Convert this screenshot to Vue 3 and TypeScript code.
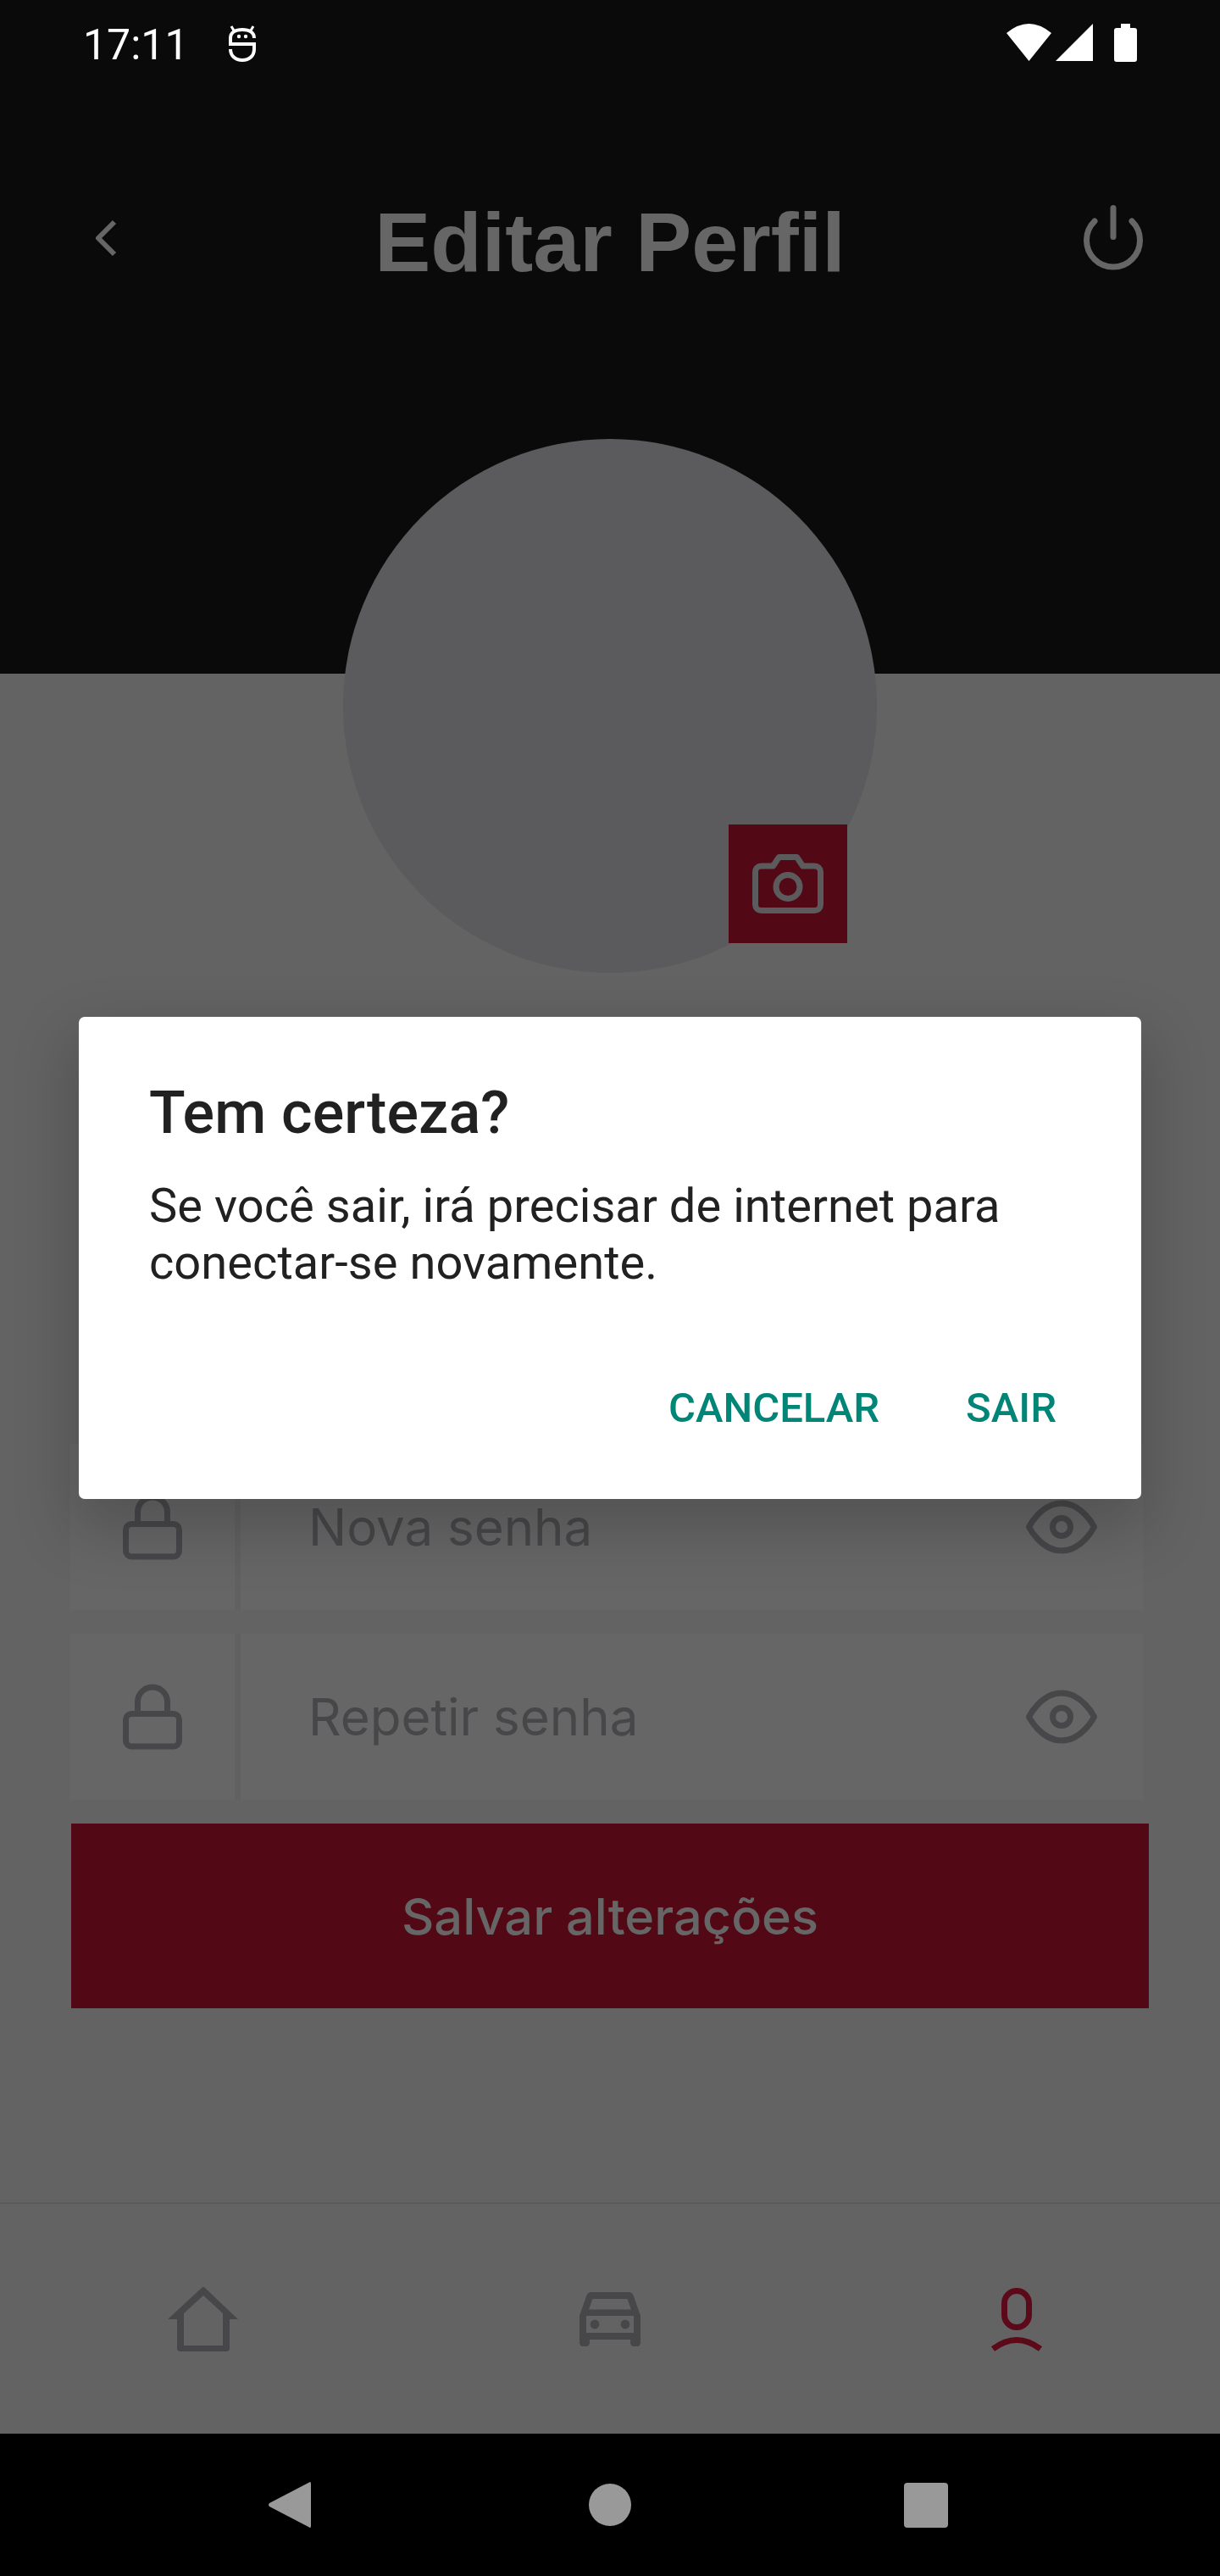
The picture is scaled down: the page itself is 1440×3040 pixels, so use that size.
<template>
  <div class="screen">
    <header class="top">
      <div class="status-bar">
        <span class="clock">17:11</span>
        <svg class="droid" width="32" height="44" viewBox="0 0 32 44" fill="none" stroke="#fff" stroke-width="4">
          <path d="M30 15C30 8 24 5 16 5S2 8 2 15v7h28v6c0 8-6 13-14 13S2 36 2 28" />
          <path d="M3 1l3 5M29 1l-3 5" stroke-width="3" />
          <circle cx="12" cy="13" r="2.2" fill="#fff" stroke="none" />
          <circle cx="20" cy="13" r="2.2" fill="#fff" stroke="none" />
        </svg>
        <div class="status-icons">
          <svg width="53" height="44" viewBox="0 0 53 44"><path d="M0 11Q26.5-11 53 11L26.5 44Z" fill="#fff" /></svg>
          <svg width="44" height="44" viewBox="0 0 44 44"><path d="M44 0V44H0Z" fill="#fff" /></svg>
          <svg class="battery" width="27" height="45" viewBox="0 0 27 45">
            <path d="M8 0h11v6H8z" fill="#fff" />
            <rect y="5" width="27" height="40" rx="3" fill="#fff" />
          </svg>
        </div>
      </div>
      <div class="app-bar">
        <svg width="84" height="112" viewBox="0 0 84 112" fill="none" stroke="#666" stroke-width="6" stroke-linejoin="round">
          <path d="M51 31L32 50l19 19" />
        </svg>
        <h1 class="title">Editar Perfil</h1>
        <svg width="84" height="112" viewBox="0 0 84 112" fill="none" stroke="#666" stroke-width="7" stroke-linecap="round">
          <path d="M42 14.5v34" />
          <path d="M20 30A31.5 31.5 0 1 0 64 30" />
        </svg>
      </div>
    </header>

    <main class="content">
      <div class="avatar">
        <div class="camera">
          <svg width="84" height="84" viewBox="0 0 24 24" fill="none" stroke="#5b5b5d" stroke-width="2" stroke-linecap="round" stroke-linejoin="round">
            <path d="M23 19a2 2 0 0 1-2 2H3a2 2 0 0 1-2-2V8a2 2 0 0 1 2-2h4l2-3h6l2 3h4a2 2 0 0 1 2 2z" />
            <circle cx="12" cy="13" r="4" />
          </svg>
        </div>
      </div>

      <form class="form" @submit.prevent>
        <div v-for="field in fields" :key="field" class="field">
          <div class="field-icon">
            <svg width="84" height="84" viewBox="0 0 24 24" fill="none" stroke="#47474a" stroke-width="2" stroke-linecap="round" stroke-linejoin="round">
              <rect x="3" y="11" width="18" height="11" rx="2" ry="2" />
              <path d="M7 11V7a5 5 0 0 1 10 0v4" />
            </svg>
          </div>
          <div class="field-input">
            <span class="placeholder">{{ field }}</span>
            <svg width="84" height="84" viewBox="0 0 24 24" fill="none" stroke="#47474a" stroke-width="2" stroke-linecap="round" stroke-linejoin="round">
              <path d="M1 12s4-8 11-8 11 8 11 8-4 8-11 8-11-8-11-8z" />
              <circle cx="12" cy="12" r="3" />
            </svg>
          </div>
        </div>
      </form>

      <button class="save" type="button">Salvar alterações</button>
    </main>

    <nav class="tabs">
      <div class="tab">
        <svg width="84" height="84" viewBox="0 0 84 84" fill="#47474a">
          <path fill-rule="evenodd" d="M40 5q2-2 4 0L83 42H73V76q0 4-4 4H15q-4 0-4-4V42H0ZM42 14 19 35V73H65V35Z" />
        </svg>
      </div>
      <div class="tab">
        <svg class="car" width="96" height="96" viewBox="0 0 24 24" fill="#47474a">
          <path d="M18.92 6.01C18.72 5.42 18.16 5 17.5 5h-11c-.66 0-1.21.42-1.42 1.01L3 12v8c0 .55.45 1 1 1h1c.55 0 1-.45 1-1v-1h12v1c0 .55.45 1 1 1h1c.55 0 1-.45 1-1v-8l-2.08-5.99zM6.85 7h10.29l1.08 3.11H5.77L6.85 7zM19 17H5v-5h14v5z" />
          <circle cx="7.5" cy="14.5" r="1.35" />
          <circle cx="16.5" cy="14.5" r="1.35" />
        </svg>
      </div>
      <div class="tab">
        <svg width="84" height="84" viewBox="0 0 84 84" fill="none" stroke="#5c0a1a" stroke-width="7">
          <rect x="27.5" y="8.5" width="29" height="43" rx="14.5" />
          <path d="M14 77Q42 56 70 77" />
        </svg>
      </div>
    </nav>

    <footer class="system-nav">
      <svg width="50" height="56" viewBox="0 0 50 56"><path d="M48 1.5Q50 0 50 3V53Q50 56 48 54.5L1 30Q-1 28 1 26Z" fill="#999" /></svg>
      <span class="home-dot"></span>
      <span class="recents"></span>
    </footer>

    <div class="dialog" role="alertdialog">
      <h2 class="dialog-title">Tem certeza?</h2>
      <p class="dialog-text">Se você sair, irá precisar de internet para conectar-se novamente.</p>
      <div class="dialog-actions">
        <button type="button">Cancelar</button>
        <button type="button">Sair</button>
      </div>
    </div>
  </div>
</template>

<script setup lang="ts">
const fields: string[] = ["Nova senha", "Repetir senha"];
</script>

<style>
html,
body {
  margin: 0;
  background: #636363;
}
</style>

<style scoped>
.screen {
  position: relative;
  width: 1440px;
  height: 3040px;
  display: flex;
  flex-direction: column;
  overflow: hidden;
  background: #636363;
  font-family: Inter, "Liberation Sans", sans-serif;
}

.top {
  height: 795px;
  flex: none;
  background: #0a0a0a;
}

.status-bar {
  height: 101px;
  box-sizing: border-box;
  display: flex;
  align-items: flex-start;
  padding: 24px 98px 0 98px;
}

.clock {
  font: 400 50px/58px Roboto, sans-serif;
  color: #fff;
}

.droid {
  margin: 6px 0 0 47px;
}

.status-icons {
  display: flex;
  gap: 5px;
  margin: 4px 0 0 auto;
}

.battery {
  margin-left: 20px;
}

.app-bar {
  display: flex;
  justify-content: space-between;
  margin-top: 129px;
  padding: 1px 84px 0;
}

.app-bar svg {
  flex: none;
}

.title {
  margin: -1px 0 0;
  font: 700 99px/112px "Liberation Sans", Arial, sans-serif;
  color: #666;
}

.content {
  flex: 1;
  display: flex;
  flex-direction: column;
  align-items: flex-start;
  margin-top: -277px;
}

.avatar {
  position: relative;
  width: 630px;
  height: 630px;
  margin-left: 405px;
  border-radius: 50%;
  background: #5b5b5d;
}

.camera {
  position: absolute;
  left: 455px;
  top: 455px;
  width: 140px;
  height: 140px;
  display: flex;
  align-items: center;
  justify-content: center;
  background: #530815;
}

.form {
  display: flex;
  flex-direction: column;
  gap: 28px;
  width: 1266px;
  margin: 556px 0 0 83px;
}

.field {
  height: 196px;
  display: grid;
  grid-template-columns: 194px 1fr;
  column-gap: 7px;
  background: #616161;
}

.field-icon,
.field-input {
  display: flex;
  align-items: center;
  background: #666;
}

.field-icon {
  justify-content: center;
}

.field-input {
  justify-content: space-between;
  padding: 0 54px 0 80px;
}

.placeholder {
  font-size: 60px;
  font-weight: 400;
  color: #47474a;
}

.save {
  width: 1272px;
  height: 218px;
  margin: 28px 0 0 84px;
  padding: 0;
  border: 0;
  background: #530815;
  color: #666;
  font: 500 59.5px Inter, sans-serif;
}

.tabs {
  height: 273px;
  flex: none;
  box-sizing: border-box;
  display: grid;
  grid-template-columns: repeat(3, 1fr);
  border-top: 2px solid #5a5a5a;
}

.tab {
  display: flex;
  align-items: center;
  justify-content: center;
}

.car {
  margin-bottom: 8px;
}

.system-nav {
  height: 168px;
  flex: none;
  display: grid;
  grid-template-columns: 400px 1fr 400px;
  align-items: center;
  justify-items: center;
  background: #000;
}

.system-nav svg {
  justify-self: end;
  margin-right: 33px;
}

.home-dot {
  width: 50px;
  height: 50px;
  border-radius: 50%;
  background: #999;
}

.recents {
  justify-self: start;
  width: 52px;
  height: 53px;
  margin-left: 27px;
  border-radius: 4px;
  background: #999;
}

.dialog {
  position: absolute;
  left: 93px;
  top: 1200px;
  width: 1254px;
  box-sizing: border-box;
  padding: 72px 100px 78px 83px;
  border-radius: 7px;
  background: #fff;
  box-shadow: 0 30px 70px 10px rgba(0, 0, 0, 0.18);
  font-family: Roboto, sans-serif;
  color: #212121;
}

.dialog-title {
  margin: 0;
  font-size: 70px;
  font-weight: 500;
  line-height: 82px;
  letter-spacing: 0.17px;
}

.dialog-text {
  margin: 36px 0 0;
  font-size: 56px;
  line-height: 67px;
  letter-spacing: 0.05px;
}

.dialog-actions {
  display: flex;
  justify-content: flex-end;
  gap: 102px;
  margin-top: 109px;
}

.dialog-actions button {
  padding: 0;
  border: 0;
  background: none;
  font: 500 49px/58px Roboto, sans-serif;
  text-transform: uppercase;
  color: #008577;
}
</style>
